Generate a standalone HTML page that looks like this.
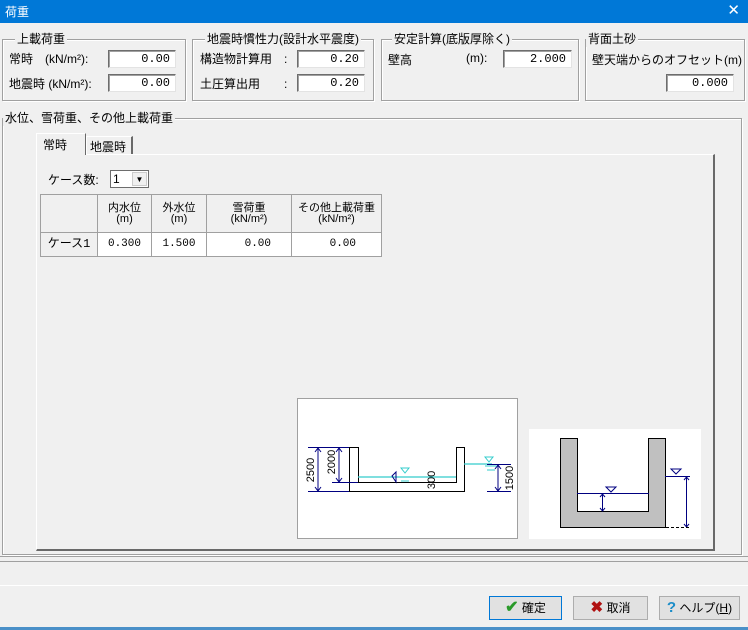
<!DOCTYPE html>
<html><head><meta charset="utf-8"><style>
*{margin:0;padding:0;box-sizing:border-box}
body{width:748px;height:630px;background:#f0f0f0;position:relative;overflow:hidden;font-family:"Liberation Sans","Noto Sans CJK JP",sans-serif;font-size:12px;color:#000}
.a{position:absolute;white-space:nowrap}
.title{left:0;top:0;width:748px;height:23px;background:#0078d7;color:#fff;font-size:12px;padding:3px 5px}
.grp{position:absolute;border:1px solid #a0a0a0;box-shadow:inset 1px 1px #fff,1px 1px #fff}
.lbl{position:absolute;background:#f0f0f0;padding:0 2px;top:-9px;line-height:16px}
.inp{position:absolute;background:#fff;border-top:1px solid #6d6d6d;border-left:1px solid #6d6d6d;border-right:1px solid #e3e3e3;border-bottom:1px solid #e3e3e3;box-shadow:inset 1px 1px #a0a0a0;text-align:right;padding-right:5px;font-family:"Liberation Mono",monospace;font-size:12px;line-height:16px}
table{border-collapse:collapse;position:absolute;left:40px;top:194px}
td{border:1px solid #a0a0a0;text-align:center;font-size:11px;line-height:11px}
.hd{background:#f0f0f0}
.btn{position:absolute;top:596px;height:24px;border:1px solid #adadad;background:#e1e1e1;text-align:center;line-height:22px;font-size:12px}
</style></head><body>
<div class="a title">荷重<span style="position:absolute;right:8px;top:1px;font-size:15px">✕</span></div>

<div class="grp" style="left:2px;top:39px;width:184px;height:62px"><div class="lbl" style="left:12px">上載荷重</div></div>
<div class="a" style="left:9px;top:50px">常時　(kN/m²):</div>
<div class="a" style="left:9px;top:75px">地震時 (kN/m²):</div>
<div class="inp" style="left:108px;top:50px;width:68px;height:18px">0.00</div>
<div class="inp" style="left:108px;top:74px;width:68px;height:18px">0.00</div>

<div class="grp" style="left:192px;top:39px;width:182px;height:62px"><div class="lbl" style="left:12px">地震時慣性力(設計水平震度)</div></div>
<div class="a" style="left:200px;top:50px">構造物計算用　:</div>
<div class="a" style="left:200px;top:75px">土圧算出用　　:</div>
<div class="inp" style="left:297px;top:50px;width:68px;height:18px">0.20</div>
<div class="inp" style="left:297px;top:74px;width:68px;height:18px">0.20</div>

<div class="grp" style="left:381px;top:39px;width:198px;height:62px"><div class="lbl" style="left:10px">安定計算(底版厚除く)</div></div>
<div class="a" style="left:388px;top:51px">壁高</div>
<div class="a" style="left:466px;top:51px">(m):</div>
<div class="inp" style="left:503px;top:50px;width:69px;height:18px">2.000</div>

<div class="grp" style="left:585px;top:39px;width:160px;height:62px"><div class="lbl" style="left:0px">背面土砂</div></div>
<div class="a" style="left:592px;top:51px">壁天端からのオフセット(m)</div>
<div class="inp" style="left:666px;top:74px;width:68px;height:18px">0.000</div>

<div class="grp" style="left:2px;top:118px;width:740px;height:437px"><div class="lbl" style="left:0px">水位、雪荷重、その他上載荷重</div></div>

<div class="a" style="left:36px;top:154px;width:679px;height:397px;border-top:1px solid #fff;border-left:1px solid #fff;border-right:2px solid #696969;border-bottom:2px solid #696969"></div>
<div class="a" style="left:36px;top:133px;width:50px;height:22px;border:1px solid #fff;border-bottom:none;border-right:1px solid #696969;background:#f0f0f0;padding:2px 0 0 6px">常時</div>
<div class="a" style="left:86px;top:136px;width:47px;height:18px;border-left:1px solid #fff;border-top:1px solid #fff;border-right:2px solid #696969;padding:1px 0 0 3px">地震時</div>

<div class="a" style="left:48px;top:171px">ケース数:</div>
<div class="a" style="left:110px;top:170px;width:39px;height:18px;background:#fff;border:1px solid #6d6d6d;padding-left:2px;line-height:16px">1<span style="position:absolute;right:1px;top:1px;width:15px;height:14px;background:#f0f0f0;border:1px solid #ccc;font-size:8px;text-align:center;line-height:13px">▼</span></div>

<table>
<tr style="height:38px"><td class="hd" style="width:57px"></td><td class="hd" style="width:54px">内水位<br>(m)</td><td class="hd" style="width:55px">外水位<br>(m)</td><td class="hd" style="width:85px">雪荷重<br>(kN/m²)</td><td class="hd" style="width:90px">その他上載荷重<br>(kN/m²)</td></tr>
<tr style="height:24px;background:#fff;font-family:'Liberation Mono',monospace"><td class="hd" style="font-size:12px">ケース1</td><td>0.300</td><td>1.500</td><td style="text-align:right;padding-right:20px">0.00</td><td style="text-align:right;padding-right:25px">0.00</td></tr>
</table>

<svg class="a" style="left:297px;top:398px" width="221" height="141">
<rect x="0.5" y="0.5" width="220" height="140" fill="#fff" stroke="#a0a0a0"/>
<path d="M52.5 49.5V93.5H167.5V49.5H159.5V84.5H61.5V49.5Z" fill="none" stroke="#000"/>
<path d="M61 79H159M167 66H195" stroke="#33cccc" stroke-width="1.2"/>
<g stroke="#000080" fill="none">
<path d="M11 49.5H52M11 93.5H52M35 84.5H61M190 66.5H214M190 93.5H214M21 50V93M42 50V84M201 67V93"/>
<path d="M18 54l3-4 3 4M18 89l3 4 3-4M39 54l3-4 3 4M39 80l3 4 3-4M198 71l3-4 3 4M198 89l3 4 3-4"/>
<path d="M95 78l4-4 0 10z"/>
</g>
<g font-size="11" font-family="Liberation Sans" text-anchor="middle" fill="#000">
<text transform="translate(17 72) rotate(-90)">2500</text>
<text transform="translate(38 64) rotate(-90)">2000</text>
<text transform="translate(216 80) rotate(-90)">1500</text>
<text transform="translate(138 82) rotate(-90)">300</text>
</g>
<g stroke="#33cccc" fill="none"><path d="M104 70h8l-4 5zM188 59h8l-4 5zM102 79h12M104 83h8M188 68h12M190 72h8"/></g>
</svg>

<svg class="a" style="left:529px;top:429px" width="172" height="110">
<rect width="172" height="110" fill="#fff"/>
<path d="M31.5 9.5H48.5V82.5H119.5V9.5H136.5V98.5H31.5Z" fill="#c0c0c0" stroke="#000"/>
<path d="M48 64.5H120M136 47.5H161" stroke="#000080" fill="none"/>
<path d="M73.5 65V82M157.5 48V98" stroke="#000080"/>
<path d="M71 68l2.5-3 2.5 3M71 79l2.5 3 2.5-3M155 51l2.5-3 2.5 3M155 95l2.5 3 2.5-3" stroke="#000080" fill="none"/>
<path d="M137 98.5H160" stroke="#000" stroke-dasharray="3 2"/>
<path d="M142 40h10l-5 5zM77 58h10l-5 5z" fill="none" stroke="#000080"/>
</svg>

<div class="a" style="left:0;top:556px;width:748px;height:1px;background:#a0a0a0"></div>
<div class="a" style="left:0;top:561px;width:748px;height:1px;background:#a0a0a0"></div>
<div class="a" style="left:0;top:585px;width:748px;height:1px;background:#fff"></div>

<div class="btn" style="left:489px;width:73px;border:1px solid #0078d7"><span style="color:#2a9a2a;font-size:16px;font-weight:bold">✔</span> 確定</div>
<div class="btn" style="left:573px;width:75px"><span style="color:#b01010;font-size:15px;font-weight:bold">✖</span> 取消</div>
<div class="btn" style="left:659px;width:81px"><span style="color:#1a8cc8;font-size:15px;font-weight:bold">?</span> ヘルプ(<u>H</u>)</div>
<div class="a" style="left:0;top:627px;width:748px;height:3px;background:#4a90c8"></div>
</body></html>
